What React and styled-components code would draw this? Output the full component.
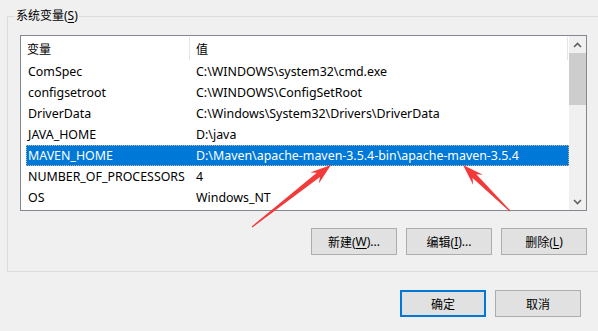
import React from 'react';
import styled, { createGlobalStyle } from 'styled-components';

const Global = createGlobalStyle`
  html, body { margin: 0; padding: 0; background: #f0f0f0; overflow: hidden; }
  body {
    font-family: "Noto Sans", "Noto Sans CJK SC", sans-serif;
    font-size: 12px;
    color: #000;
  }
  * { box-sizing: border-box; }
`;

const Page = styled.div`
  position: relative;
  width: 598px;
  height: 331px;
  padding-top: 8px;
`;

const GroupBox = styled.fieldset`
  margin: 0 0 0 7px;
  width: 593px;
  min-inline-size: 0;
  border: 1px solid #dcdcdc;
  padding: 11px 12px 16px 12px;
`;

const Legend = styled.legend`
  margin-left: -5px;
  padding: 0 1px;
  line-height: 16px;
  font-size: 12px;
`;

const U = styled.span`
  text-decoration: underline;
  text-underline-offset: 2px;
`;

const ListBox = styled.div`
  width: 567px;
  height: 176px;
  border: 1px solid #828790;
  background: #fff;
  display: flex;
`;

const ListContent = styled.div`
  flex: 1;
  display: flex;
  flex-direction: column;
  overflow: hidden;
`;

const Header = styled.div`
  height: 25px;
  display: flex;
  align-items: stretch;
  flex-shrink: 0;
`;

const HeaderCell = styled.div`
  width: ${(p) => p.$w}px;
  padding-left: ${(p) => p.$pl}px;
  display: flex;
  align-items: center;
  border-right: 1px solid #e5e5e5;
  margin: 1px 0 1px 0;
`;

const Rows = styled.div`
  display: flex;
  flex-direction: column;
  padding-left: 5px;
`;

const Row = styled.div`
  height: 21px;
  display: flex;
  align-items: center;
  font-size: 12.4px;
  background: ${(p) => (p.$selected ? '#0078d7' : 'transparent')};
  color: ${(p) => (p.$selected ? '#fff' : '#000')};
  outline: ${(p) => (p.$selected ? '1px dotted rgba(255,200,140,0.8)' : 'none')};
  outline-offset: -1px;
  white-space: nowrap;
`;

const Cell = styled.div`
  width: ${(p) => (p.$w ? `${p.$w}px` : 'auto')};
  padding-left: 2px;
  flex-shrink: 0;
`;

const ScrollBar = styled.div`
  width: 17px;
  background: #f0f0f0;
  display: flex;
  flex-direction: column;
`;

const ScrollBtn = styled.div`
  height: 17px;
  display: flex;
  align-items: center;
  justify-content: center;
`;

const Track = styled.div`
  flex: 1;
  display: flex;
  flex-direction: column;
`;

const Thumb = styled.div`
  height: 52px;
  background: #cdcdcd;
`;

const ButtonRow = styled.div`
  display: flex;
  justify-content: flex-end;
  gap: ${(p) => p.$gap}px;
  margin-top: ${(p) => p.$mt}px;
  padding-right: ${(p) => p.$pr}px;
`;

const Button = styled.div`
  width: 86px;
  height: 27px;
  display: flex;
  align-items: center;
  justify-content: center;
  background: #e1e1e1;
  border: ${(p) => (p.$default ? '2px solid #0078d7' : '1px solid #adadad')};
  font-size: 12px;
`;

const Overlay = styled.svg`
  position: absolute;
  left: 0;
  top: 0;
  pointer-events: none;
`;

const rows = [
  ['ComSpec', 'C:\\WINDOWS\\system32\\cmd.exe'],
  ['configsetroot', 'C:\\WINDOWS\\ConfigSetRoot'],
  ['DriverData', 'C:\\Windows\\System32\\Drivers\\DriverData'],
  ['JAVA_HOME', 'D:\\java'],
  ['MAVEN_HOME', 'D:\\Maven\\apache-maven-3.5.4-bin\\apache-maven-3.5.4'],
  ['NUMBER_OF_PROCESSORS', '4'],
  ['OS', 'Windows_NT'],
];

function arrowPoints(sx, sy, tx, ty) {
  const dx = tx - sx;
  const dy = ty - sy;
  const len = Math.hypot(dx, dy);
  const ux = dx / len;
  const uy = dy / len;
  const nx = -uy;
  const ny = ux;
  const headLen = 21;
  const neckLen = 16;
  const headW = 7;
  const neckW = 2.6;
  const tailW = 0.6;
  const bx = tx - ux * headLen;
  const by = ty - uy * headLen;
  const kx = tx - ux * neckLen;
  const ky = ty - uy * neckLen;
  const pts = [
    [sx + nx * tailW, sy + ny * tailW],
    [kx + nx * neckW, ky + ny * neckW],
    [bx + nx * headW, by + ny * headW],
    [tx, ty],
    [bx - nx * headW, by - ny * headW],
    [kx - nx * neckW, ky - ny * neckW],
    [sx - nx * tailW, sy - ny * tailW],
  ];
  return pts.map((p) => `${p[0].toFixed(1)},${p[1].toFixed(1)}`).join(' ');
}

const Chevron = ({ up }) => (
  <svg width="9" height="6" viewBox="0 0 9 6">
    <path
      d={up ? 'M1 5 L4.5 1.5 L8 5' : 'M1 1 L4.5 4.5 L8 1'}
      fill="none"
      stroke="#606060"
      strokeWidth="1.6"
    />
  </svg>
);

export default function App() {
  return (
    <>
      <Global />
      <Page>
        <GroupBox>
          <Legend>
            系统变量(<U>S</U>)
          </Legend>
          <ListBox>
            <ListContent>
              <Header>
                <HeaderCell $w={169} $pl={6}>变量</HeaderCell>
                <HeaderCell $w={378} $pl={6}>值</HeaderCell>
              </Header>
              <Rows>
                {rows.map(([k, v]) => (
                  <Row key={k} $selected={k === 'MAVEN_HOME'}>
                    <Cell $w={168}>{k}</Cell>
                    <Cell>{v}</Cell>
                  </Row>
                ))}
              </Rows>
            </ListContent>
            <ScrollBar>
              <ScrollBtn>
                <Chevron up />
              </ScrollBtn>
              <Track>
                <Thumb />
              </Track>
              <ScrollBtn>
                <Chevron />
              </ScrollBtn>
            </ScrollBar>
          </ListBox>
          <ButtonRow $gap={9} $mt={17} $pr={0}>
            <Button>
              新建(<U>W</U>)...
            </Button>
            <Button>
              编辑(<U>I</U>)...
            </Button>
            <Button>
              删除(<U>L</U>)
            </Button>
          </ButtonRow>
        </GroupBox>
        <ButtonRow $gap={9} $mt={18} $pr={17}>
          <Button $default>确定</Button>
          <Button>取消</Button>
        </ButtonRow>
        <Overlay width="598" height="331" viewBox="0 0 598 331">
          <polygon points={arrowPoints(252, 227, 331, 165)} fill="#f23a3a" />
          <polygon points={arrowPoints(510, 211, 463, 165)} fill="#f23a3a" />
        </Overlay>
      </Page>
    </>
  );
}
